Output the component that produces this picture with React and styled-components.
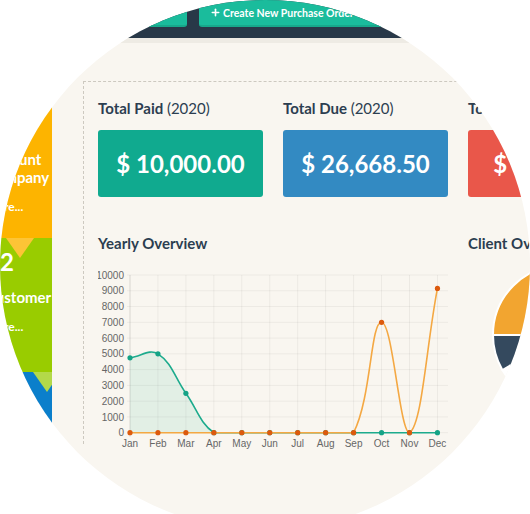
import React from "react";
import styled, { createGlobalStyle } from "styled-components";
import { Plus } from "lucide-react";

const GlobalStyle = createGlobalStyle`
  html, body {
    margin: 0;
    padding: 0;
    background: #ffffff;
  }
  body {
    width: 530px;
    height: 514px;
    overflow: hidden;
    font-family: Lato, "Open Sans", sans-serif;
  }
`;

const Lens = styled.div`
  width: 530px;
  height: 530px;
  border-radius: 50%;
  overflow: hidden;
  background: #f9f6f0;
  display: flex;
  flex-direction: column;
`;

const TopBar = styled.div`
  height: 38px;
  flex-shrink: 0;
  background: #283848;
  display: flex;
  align-items: flex-start;
  gap: 12px;
  padding-left: 17px;
`;

const ActionButton = styled.div`
  height: 27px;
  box-sizing: border-box;
  width: ${(p) => (p.$width ? `${p.$width}px` : "auto")};
  padding: 0 11px;
  background: #1abc9c;
  border-bottom: 2px solid #17a88b;
  border-radius: 0 0 3px 3px;
  display: flex;
  align-items: center;
  gap: 2px;
  color: #ffffff;
  font-size: 10.5px;
  font-weight: 700;
  white-space: nowrap;
`;

const Strip = styled.div`
  height: 5px;
  flex-shrink: 0;
  background: #eeebe4;
`;

const Body = styled.div`
  flex: 1;
  display: flex;
  min-height: 0;
`;

const Sidebar = styled.div`
  width: 70px;
  margin-left: -18px;
  flex-shrink: 0;
  overflow: hidden;
  display: flex;
  flex-direction: column;
`;

const Tile = styled.div`
  position: relative;
  flex-shrink: 0;
  box-sizing: border-box;
  height: ${(p) => p.$h}px;
  background: ${(p) => p.$bg};
  color: #ffffff;
  padding: 10px 0 0 4px;
  white-space: nowrap;
`;

const TileCount = styled.div`
  font-size: 24px;
  font-weight: 700;
  line-height: 28px;
`;

const TileLabel = styled.div`
  margin-top: 12px;
  font-size: 15px;
  font-weight: 700;
  line-height: 18px;
`;

const TileLink = styled.div`
  margin-top: 13px;
  font-size: 12px;
  font-weight: 700;
  line-height: 16px;
`;

const Pointer = styled.span`
  position: absolute;
  top: 100%;
  left: ${(p) => p.$left}px;
  z-index: 2;
  width: 0;
  height: 0;
  border-left: 14px solid transparent;
  border-right: 14px solid transparent;
  border-top: 20px solid ${(p) => p.$color};
`;

const Main = styled.div`
  flex: 1;
  min-width: 0;
  padding: 38px 0 0 31px;
`;

const Panel = styled.div`
  width: 600px;
  height: 346px;
  border-left: 1px dashed #cdc9c0;
  border-top: 1px dashed #cdc9c0;
  padding: 16px 0 0 14px;
`;

const Grid = styled.div`
  display: grid;
  grid-template-columns: repeat(3, 165px);
  column-gap: 20px;
  row-gap: 36px;
`;

const Title = styled.div`
  color: #2c3e50;
  font-size: 15px;
  font-weight: 700;
  line-height: 20px;
  margin-bottom: 12px;
  white-space: nowrap;

  span {
    font-weight: 400;
  }
`;

const StatBox = styled.div`
  height: 67px;
  border-radius: 3px;
  background: ${(p) => p.$color};
  display: flex;
  align-items: center;
  justify-content: center;
  color: #ffffff;
  font-size: 24px;
  font-weight: 700;
`;

const Wide = styled.div`
  grid-column: span 2;
`;

const ChartBox = styled.svg`
  display: block;
`;

const months = ["Jan", "Feb", "Mar", "Apr", "May", "Jun", "Jul", "Aug", "Sep", "Oct", "Nov", "Dec"];
const paid = [4750, 5000, 2500, 0, 0, 0, 0, 0, 0, 0, 0, 0];
const due = [0, 0, 0, 0, 0, 0, 0, 0, 0, 7000, 0, 9150];

const X0 = 32;
const DX = 27.95;
const TOP = 10;
const BOTTOM = 167.7;
const px = (i) => X0 + i * DX;
const py = (v) => BOTTOM - (v / 10000) * (BOTTOM - TOP);

// same bezier smoothing as the old Chart.js line chart (tension 0.4)
function spline(values) {
  const pts = values.map((v, i) => ({ x: px(i), y: py(v) }));
  const clamp = (y) => Math.min(BOTTOM, Math.max(TOP, y));
  const cps = pts.map((p, i) => {
    const a = pts[i - 1] || p;
    const b = pts[i + 1] || p;
    const d01 = Math.hypot(p.x - a.x, p.y - a.y);
    const d12 = Math.hypot(b.x - p.x, b.y - p.y);
    const sum = d01 + d12 || 1;
    const fa = (0.4 * d01) / sum;
    const fb = (0.4 * d12) / sum;
    return {
      inner: { x: p.x - fa * (b.x - a.x), y: clamp(p.y - fa * (b.y - a.y)) },
      outer: { x: p.x + fb * (b.x - a.x), y: clamp(p.y + fb * (b.y - a.y)) },
    };
  });
  let d = `M${pts[0].x},${pts[0].y}`;
  for (let i = 1; i < pts.length; i++) {
    d += ` C${cps[i - 1].outer.x},${cps[i - 1].outer.y} ${cps[i].inner.x},${cps[i].inner.y} ${pts[i].x},${pts[i].y}`;
  }
  const fill = `${d} L${pts[pts.length - 1].x},${BOTTOM} L${pts[0].x},${BOTTOM} Z`;
  return { pts, d, fill };
}

function YearlyChart() {
  const teal = spline(paid);
  const orange = spline(due);
  const steps = Array.from({ length: 11 }, (_, i) => i * 1000);
  return (
    <ChartBox width="352" height="190">
      <g stroke="rgba(0,0,0,0.05)" strokeWidth="1">
        {steps.map((s) => (
          <line key={s} x1="29" x2="350" y1={py(s)} y2={py(s)} />
        ))}
        {months.map((m, i) => (
          <line key={m} x1={px(i)} x2={px(i)} y1={TOP} y2={BOTTOM + 4} />
        ))}
      </g>
      <line x1={X0} x2={X0} y1={TOP} y2={BOTTOM + 4} stroke="rgba(0,0,0,0.08)" />
      <g fontFamily="'Liberation Sans', Arial, sans-serif" fontSize="10" fill="#666">
        {steps.map((s) => (
          <text key={s} x="26" y={py(s) + 3.6} textAnchor="end">
            {s}
          </text>
        ))}
        {months.map((m, i) => (
          <text key={m} x={px(i)} y="182" textAnchor="middle">
            {m}
          </text>
        ))}
      </g>
      <path d={teal.fill} fill="rgba(26,172,142,0.1)" />
      <path d={teal.d} fill="none" stroke="#1dab8d" strokeWidth="1.6" />
      {teal.pts.map((p, i) => (
        <circle key={i} cx={p.x} cy={p.y} r="2.6" fill="#14a386" />
      ))}
      <path d={orange.d} fill="none" stroke="#f4a843" strokeWidth="1.6" />
      {orange.pts.map((p, i) => (
        <circle key={i} cx={p.x} cy={p.y} r="2.6" fill="#dc5a0d" />
      ))}
    </ChartBox>
  );
}

function slice(cx, cy, r, a0, a1) {
  const rad = (a) => (a * Math.PI) / 180;
  const x0 = cx + r * Math.cos(rad(a0));
  const y0 = cy + r * Math.sin(rad(a0));
  const x1 = cx + r * Math.cos(rad(a1));
  const y1 = cy + r * Math.sin(rad(a1));
  const large = a1 - a0 > 180 ? 1 : 0;
  return `M${cx},${cy} L${x0},${y0} A${r},${r} 0 ${large} 1 ${x1},${y1} Z`;
}

function ClientPie() {
  const segments = [
    { from: -90, to: 150, color: "#ffffff" },
    { from: 150, to: 180, color: "#34495e" },
    { from: 180, to: 270, color: "#f2a530" },
  ];
  return (
    <ChartBox width="165" height="145">
      {segments.map((s) => (
        <path key={s.from} d={slice(95, 70, 70, s.from, s.to)} fill={s.color} stroke="#ffffff" strokeWidth="2" />
      ))}
    </ChartBox>
  );
}

const stats = [
  { title: "Total Paid", value: "$ 10,000.00", color: "#10aa8f" },
  { title: "Total Due", value: "$ 26,668.50", color: "#338ac2" },
  { title: "Total Overdue", value: "$ 4,250.00", color: "#e9574a" },
];

export default function App() {
  return (
    <>
      <GlobalStyle />
      <Lens>
        <TopBar>
          <ActionButton $width={170}>
            <Plus size={11} strokeWidth={3.5} />
            Create New Invoice
          </ActionButton>
          <ActionButton>
            <Plus size={11} strokeWidth={3.5} />
            Create New Purchase Order Form
          </ActionButton>
        </TopBar>
        <Strip />
        <Body>
          <Sidebar>
            <Tile $h={57} $bg="#e67e22" />
            <Tile $h={138} $bg="#fdb400">
              <TileCount>8</TileCount>
              <TileLabel>
                Account
                <br />
                Company
              </TileLabel>
              <TileLink>More...</TileLink>
              <Pointer $left={24} $color="#fdc436" />
            </Tile>
            <Tile $h={134} $bg="#99cc00">
              <TileCount>12</TileCount>
              <TileLabel>Customer</TileLabel>
              <TileLink>More...</TileLink>
              <Pointer $left={51} $color="#b3d94a" />
            </Tile>
            <Tile $h={200} $bg="#0b7fcb" />
          </Sidebar>
          <Main>
            <Panel>
              <Grid>
                {stats.map((s) => (
                  <div key={s.title}>
                    <Title>
                      {s.title} <span>(2020)</span>
                    </Title>
                    <StatBox $color={s.color}>{s.value}</StatBox>
                  </div>
                ))}
                <Wide>
                  <Title>Yearly Overview</Title>
                  <YearlyChart />
                </Wide>
                <div>
                  <Title>Client Overview</Title>
                  <ClientPie />
                </div>
              </Grid>
            </Panel>
          </Main>
        </Body>
      </Lens>
    </>
  );
}
